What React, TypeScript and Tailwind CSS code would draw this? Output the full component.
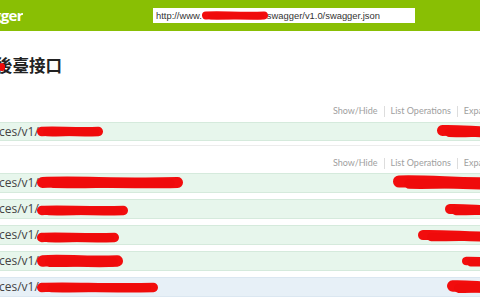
import React from "react";

function Scribble({ w, h, className, tilt = 0 }: { w: number; h: number; className?: string; tilt?: number }) {
  const sw = h * 0.72;
  const r = sw / 2;
  const y = h / 2;
  const x0 = r;
  const x1 = w - r;
  const d = `M${x0},${y + tilt} C${x0 + (x1 - x0) * 0.25},${y - h * 0.12} ${x0 + (x1 - x0) * 0.55},${y + h * 0.1} ${x1},${y - tilt}`;
  const d2 = `M${x0 + w * 0.08},${y + h * 0.08} C${x0 + (x1 - x0) * 0.35},${y + h * 0.14} ${x0 + (x1 - x0) * 0.7},${y - h * 0.06} ${x1 - w * 0.05},${y + h * 0.05}`;
  return (
    <svg width={w} height={h} viewBox={`0 0 ${w} ${h}`} className={className}>
      <path d={d} stroke="#f20d0d" strokeWidth={sw} strokeLinecap="round" fill="none" />
      <path d={d2} stroke="#ef0b0b" strokeWidth={sw * 0.8} strokeLinecap="round" fill="none" />
    </svg>
  );
}

function Links() {
  return (
    <div
      className="h-[16px] flex items-center pl-[333px] whitespace-nowrap text-[9px] text-[#a0a0a0]"
      style={{ fontFamily: 'Lato, "Open Sans", sans-serif' }}
    >
      <span>Show/Hide</span>
      <span className="mx-[6px] h-[11px] w-px shrink-0 bg-[#dddddd]" />
      <span>List Operations</span>
      <span className="mx-[6px] h-[11px] w-px shrink-0 bg-[#dddddd]" />
      <span>Expand Operations</span>
    </div>
  );
}

type RowProps = {
  h: number;
  blue?: boolean;
  left: { w: number; h: number; dy: number };
  right: { x: number; h: number; dy: number };
};

function Row({ h, blue, left, right }: RowProps) {
  return (
    <div
      className={`relative flex items-center border-y ${blue ? "bg-[#e7f0f7] border-[#dbe7f1]" : "bg-[#e7f6ec] border-[#d5eadc]"}`}
      style={{ height: h }}
    >
      <span className="text-[12px] text-[#444] leading-none ml-[-1px]" style={{ fontFamily: '"Open Sans", "Noto Sans", sans-serif' }}>
        ces/v1/
      </span>
      <div className="absolute left-[37px]" style={{ top: left.dy }}>
        <Scribble w={left.w} h={left.h} />
      </div>
      <div className="absolute" style={{ left: right.x, top: right.dy }}>
        <Scribble w={520 - right.x} h={right.h} tilt={-1} />
      </div>
    </div>
  );
}

export default function App() {
  return (
    <div className="w-[480px] h-[300px] overflow-hidden bg-white relative" style={{ fontFamily: '"Open Sans", "Noto Sans", sans-serif' }}>
      <header className="h-[31px] bg-[#89bf04] flex items-center">
        <div className="w-[23px] shrink-0 overflow-hidden flex justify-end">
          <span
            className="text-white font-bold text-[15px] leading-none mb-[1px] whitespace-nowrap tracking-[-0.6px]"
            style={{ fontFamily: '"Open Sans", sans-serif' }}
          >
            gger
          </span>
        </div>
        <div
          className="relative ml-[130px] w-[262px] h-[15px] bg-white flex items-center pl-[3px] text-[9.4px] text-[#333] leading-none whitespace-nowrap"
          style={{ fontFamily: '"Liberation Sans", Arial, sans-serif' }}
        >
          <span>http://www.</span>
          <span className="inline-block w-[65px]" />
          <span>swagger/v1.0/swagger.json</span>
          <div className="absolute left-[49px] top-[2px]">
            <Scribble w={66} h={11} />
          </div>
        </div>
      </header>

      <div className="relative mt-[26px] h-[17px] flex items-center">
        <h1
          className="text-[16.5px] font-bold text-[#222] leading-none ml-[-4px]"
          style={{ fontFamily: '"Noto Sans CJK TC", "Noto Sans CJK SC", sans-serif' }}
        >
          後臺接口
        </h1>
        <div className="absolute left-[-2px] top-[5px]">
          <Scribble w={7} h={10} />
        </div>
      </div>

      <div className="mt-[29px]">
        <Links />
      </div>
      <div className="mt-[3px]">
        <Row h={19} left={{ w: 66, h: 13, dy: 2 }} right={{ x: 437, h: 15, dy: 1 }} />
      </div>
      <div className="mt-[4px] border-b border-[#ececec]" />

      <div className="mt-[9px]">
        <Links />
      </div>
      <div className="mt-[2px] flex flex-col gap-[6px]">
        <Row h={20} left={{ w: 146, h: 15, dy: 1 }} right={{ x: 393, h: 17, dy: 0 }} />
        <Row h={20} left={{ w: 91, h: 13, dy: 4 }} right={{ x: 445, h: 14, dy: 3 }} />
        <Row h={20} left={{ w: 82, h: 13, dy: 5 }} right={{ x: 418, h: 14, dy: 3 }} />
        <Row h={20} left={{ w: 86, h: 16, dy: 1 }} right={{ x: 462, h: 12, dy: 4 }} />
        <Row h={20} blue left={{ w: 121, h: 13, dy: 3 }} right={{ x: 447, h: 16, dy: 1 }} />
      </div>
    </div>
  );
}
